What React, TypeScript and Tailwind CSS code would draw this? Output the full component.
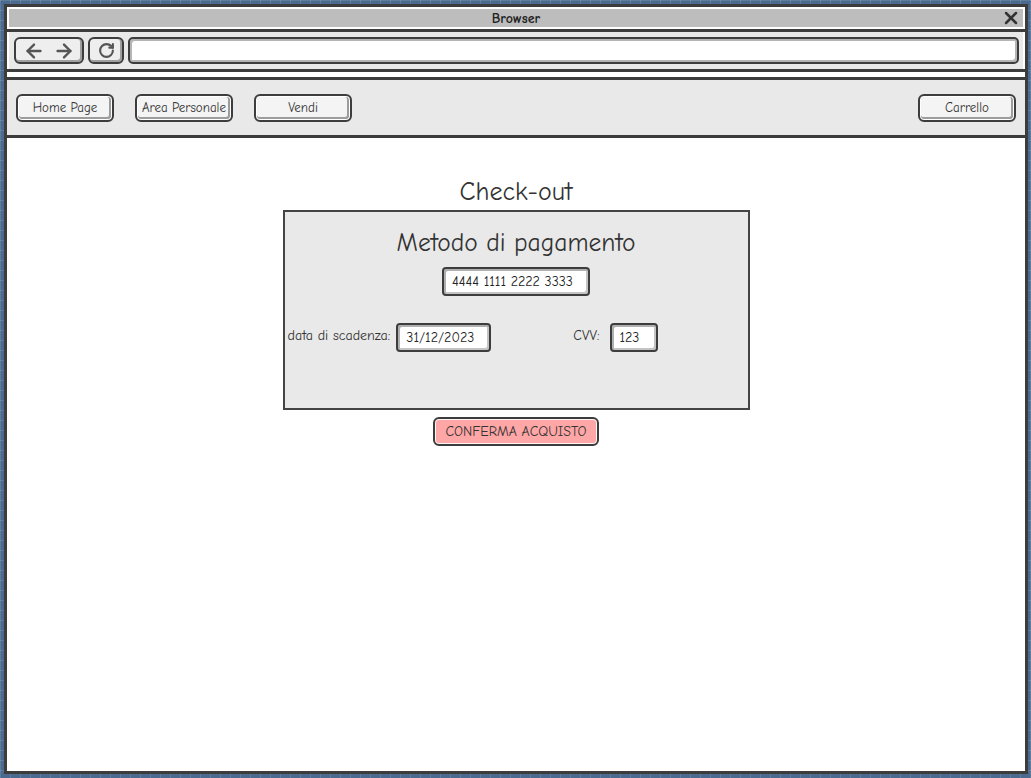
import React from 'react';
import { ArrowLeft, ArrowRight, RotateCw, X } from 'lucide-react';

const font = "font-['Comic_Sans_MS','Comic_Neue','Open_Sans',sans-serif]";

const SketchButton = ({ label, className = '' }: { label: string; className?: string }) => (
  <div
    className={`h-[28px] flex items-center justify-center rounded-[6px] border-2 border-[#3d3d3d] bg-[#f4f4f4] shadow-[inset_0_0_0_1px_#ffffff,inset_-1px_-1px_0_2px_#9c9c9c] text-[13px] text-[#333] ${className}`}
  >
    {label}
  </div>
);

const SketchInput = ({ value, className = '' }: { value: string; className?: string }) => (
  <div
    className={`h-[29px] flex items-center rounded-[4px] border-2 border-[#3d3d3d] bg-white shadow-[inset_2px_2px_0_0_#b0b0b0,inset_-2px_-2px_0_0_#c4c4c4] px-[8px] text-[14px] text-[#222] ${className}`}
  >
    {value}
  </div>
);

export default function App() {
  return (
    <div
      className={`w-[1031px] h-[778px] p-[4px] bg-[#4a6a90] bg-[linear-gradient(rgba(255,255,255,0.12)_1px,transparent_1px),linear-gradient(90deg,rgba(255,255,255,0.12)_1px,transparent_1px)] bg-[size:10px_10px] ${font}`}
    >
      <div className="h-[770px] w-[1024px] border-[3px] border-[#3c3c3c] bg-white flex flex-col">
        {/* title bar */}
        <div className="px-[2px] pt-[2px] pb-[2px]">
          <div className="h-[18px] bg-[#bdbdbd] relative flex items-center justify-center text-[14px] font-bold text-[#222] pt-[1px]">
            Browser
            <X size={20} strokeWidth={3} className="absolute right-[2px] top-[-1px] text-[#333]" />
          </div>
        </div>
        <div className="h-[3px] bg-[#3c3c3c]" />
        {/* toolbar */}
        <div className="h-[37px] bg-[#e9e9e9] mx-[2px] flex items-start pt-[5px] pl-[5px] pr-[4px] gap-[4px]">
          <div className="w-[70px] h-[27px] flex items-center justify-center gap-[8px] rounded-[6px] border-2 border-[#3d3d3d] bg-[#eeeeee] shadow-[inset_-1px_-1px_0_1px_#a0a0a0]">
            <ArrowLeft size={22} strokeWidth={2.6} className="text-[#555]" />
            <ArrowRight size={22} strokeWidth={2.6} className="text-[#555]" />
          </div>
          <div className="w-[36px] h-[27px] flex items-center justify-center rounded-[6px] border-2 border-[#3d3d3d] bg-[#eeeeee] shadow-[inset_-1px_-1px_0_1px_#a0a0a0]">
            <RotateCw size={17} strokeWidth={3} className="text-[#555]" />
          </div>
          <div className="flex-1 h-[27px] rounded-[5px] border-2 border-[#3d3d3d] bg-white shadow-[inset_2px_2px_0_0_#b5b5b5,inset_-2px_-2px_0_0_#b5b5b5]" />
        </div>
        <div className="h-[3px] bg-[#3c3c3c]" />
        <div className="h-[5px] bg-white" />
        <div className="h-[3px] bg-[#3c3c3c]" />
        {/* nav */}
        <div className="h-[55px] bg-[#e9e9e9] flex items-start pt-[14px] pl-[9px] pr-[9px]">
          <SketchButton label="Home Page" className="w-[98px]" />
          <SketchButton label="Area Personale" className="w-[98px] ml-[21px]" />
          <SketchButton label="Vendi" className="w-[98px] ml-[21px]" />
          <SketchButton label="Carrello" className="w-[98px] ml-auto" />
        </div>
        <div className="h-[3px] bg-[#3c3c3c]" />
        {/* content */}
        <div className="flex-1 flex flex-col items-center pt-[39px]">
          <div className="text-[26px] leading-[31px] text-[#333]">Check-out</div>
          <div className="mt-[2px] w-[467px] h-[200px] border-2 border-[#444] bg-[#e9e9e9] flex flex-col">
            <div className="text-center text-[25.5px] leading-[30px] text-[#333] mt-[16px]">Metodo di pagamento</div>
            <div className="flex justify-center mt-[9px]">
              <SketchInput value="4444 1111 2222 3333" className="w-[148px]" />
            </div>
            <div className="flex items-start mt-[27px] pl-[3px] text-[14px] text-[#333]">
              <span className="mt-[2px]">data di scadenza:</span>
              <SketchInput value="31/12/2023" className="w-[95px] ml-[6px]" />
              <span className="mt-[2px] ml-[82px]">CVV:</span>
              <SketchInput value="123" className="w-[48px] ml-[10px]" />
            </div>
          </div>
          <div className="mt-[7px] w-[166px] h-[29px] flex items-center justify-center rounded-[6px] border-2 border-[#3d3d3d] bg-[#ffa6a6] shadow-[inset_0_0_0_1px_#fff4f4] text-[14px] text-[#333]">
            CONFERMA ACQUISTO
          </div>
        </div>
      </div>
    </div>
  );
}
